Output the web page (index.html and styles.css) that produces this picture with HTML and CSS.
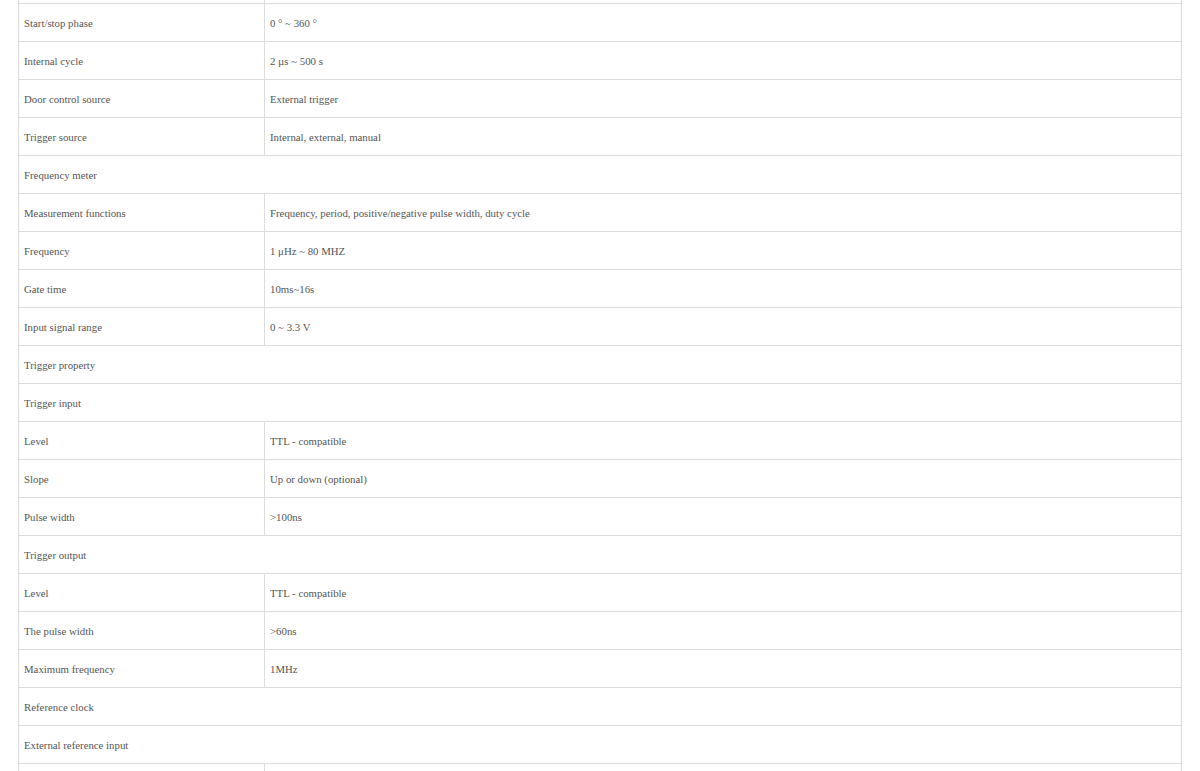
FILE: index.html
```html
<!DOCTYPE html>
<html lang="en">
<head>
  <meta charset="UTF-8" />
  <title>Specifications</title>
  <link rel="stylesheet" href="styles.css">
</head>
<body>
  <div class="spec-wrap">
    <table class="spec-table">
      <tr><td class="key">&nbsp;</td><td>&nbsp;</td></tr>
      <tr><td class="key">Start/stop phase</td><td>0 ° ~ 360 °</td></tr>
      <tr><td class="key">Internal cycle</td><td>2 µs ~ 500 s</td></tr>
      <tr><td class="key">Door control source</td><td>External trigger</td></tr>
      <tr><td class="key">Trigger source</td><td>Internal, external, manual</td></tr>
      <tr><td colspan="2">Frequency meter</td></tr>
      <tr><td class="key">Measurement functions</td><td>Frequency, period, positive/negative pulse width, duty cycle</td></tr>
      <tr><td class="key">Frequency</td><td>1 μHz ~ 80 MHZ</td></tr>
      <tr><td class="key">Gate time</td><td>10ms~16s</td></tr>
      <tr><td class="key">Input signal range</td><td>0 ~ 3.3 V</td></tr>
      <tr><td colspan="2">Trigger property</td></tr>
      <tr><td colspan="2">Trigger input</td></tr>
      <tr><td class="key">Level</td><td>TTL - compatible</td></tr>
      <tr><td class="key">Slope</td><td>Up or down (optional)</td></tr>
      <tr><td class="key">Pulse width</td><td>&gt;100ns</td></tr>
      <tr><td colspan="2">Trigger output</td></tr>
      <tr><td class="key">Level</td><td>TTL - compatible</td></tr>
      <tr><td class="key">The pulse width</td><td>&gt;60ns</td></tr>
      <tr><td class="key">Maximum frequency</td><td>1MHz</td></tr>
      <tr><td colspan="2">Reference clock</td></tr>
      <tr><td colspan="2">External reference input</td></tr>
      <tr><td class="key">&nbsp;</td><td>&nbsp;</td></tr>
    </table>
  </div>
</body>
</html>
```

FILE: styles.css
```css
* {
  box-sizing: border-box;
}

body {
  margin: 0;
  background: #ffffff;
  font-family: 'Liberation Serif', 'Times New Roman', serif;
  color: #555555;
  overflow: hidden;
}

.spec-wrap {
  padding-left: 18px;
  margin-top: -35px;
}

.spec-table {
  width: 1164px;
  border-collapse: collapse;
  font-size: 10.8px;
}

.spec-table td {
  height: 38px;
  padding: 1px 5px 0;
  border: 1px solid #dcdcdc;
  vertical-align: middle;
}

.spec-table td.key {
  width: 246px;
}
```
